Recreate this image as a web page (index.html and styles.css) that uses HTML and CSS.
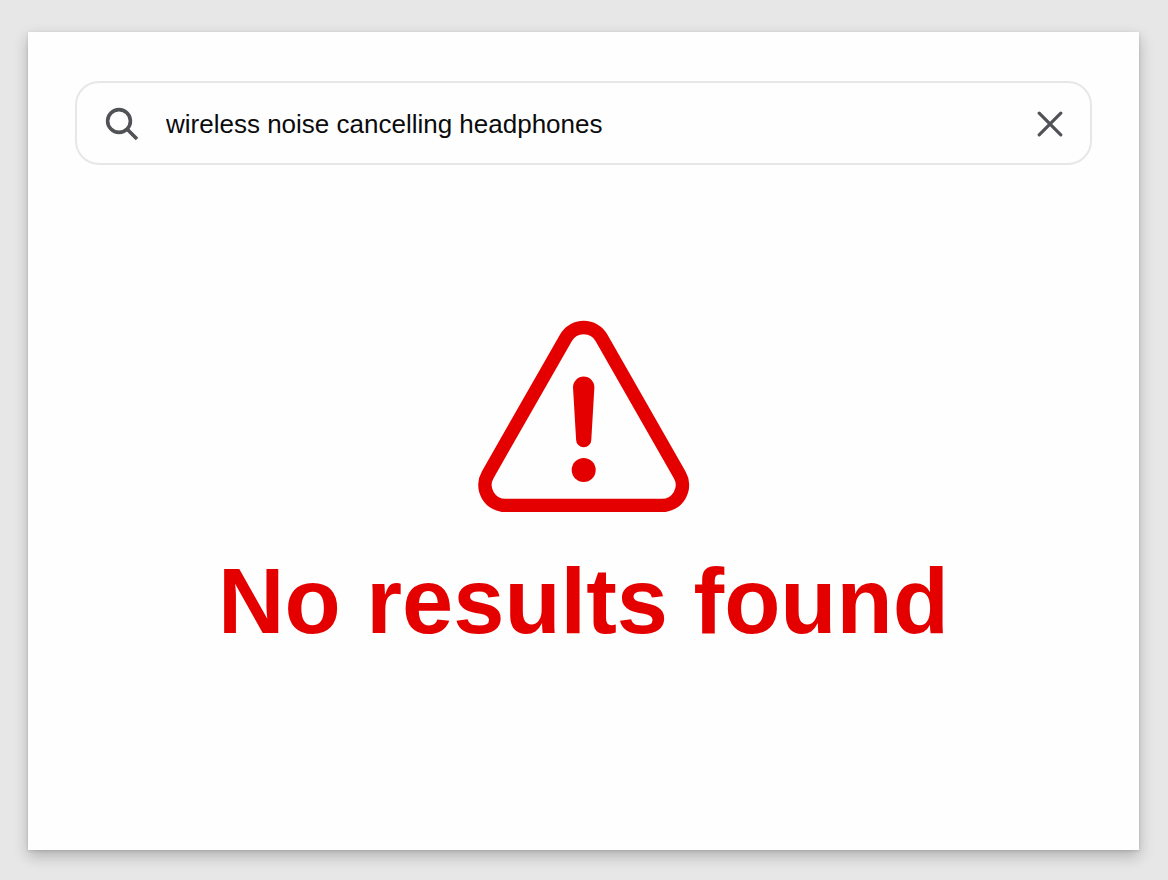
FILE: index.html
```html
<!DOCTYPE html>
<html lang="en">
<head>
	<meta charset="UTF-8">
	<meta name="viewport" content="width=device-width, initial-scale=1">
	<title>Search - No results found</title>
	<link rel="stylesheet" href="styles.css">
</head>
<body>
	<main class="card">
		<form class="search" role="search">
			<label for="query" class="search-label" aria-label="Search">
				<svg class="icon-search" viewBox="0 0 34 34" aria-hidden="true">
					<circle cx="14" cy="14" r="11.4"/>
					<path d="M22.2 22.2L32 32"/>
				</svg>
			</label>
			<input type="text" id="query" class="search-input" value="wireless noise cancelling headphones" autocomplete="off" spellcheck="false">
			<button type="reset" class="search-clear" aria-label="Clear search">
				<svg class="icon-clear" viewBox="0 0 26 26" aria-hidden="true">
					<path d="M2.2 2.2L23.8 23.8M23.8 2.2L2.2 23.8"/>
				</svg>
			</button>
		</form>
		<section class="empty">
			<svg class="icon-warning" viewBox="0 0 212 192" aria-hidden="true">
				<path class="outline" d="M9.7 154.8L87.9 17.8A20.5 20.5 0 0 1 123.5 17.8L201.7 154.8A20.5 20.5 0 0 1 183.9 185.5H27.5A20.5 20.5 0 0 1 9.7 154.8Z"/>
				<path d="M95 67.2A10.7 10.7 0 0 1 116.4 67.2L113.3 119.7A7.6 7.6 0 0 1 98.1 119.7Z"/>
				<circle cx="105.7" cy="150" r="12"/>
			</svg>
			<h1 class="empty-title">No results found</h1>
		</section>
	</main>
</body>
</html>
```
FILE: styles.css
```css
* {
	box-sizing: border-box;
}

body {
	margin: 0;
	min-height: 100vh;
	padding: 32px 29px 30px 28px;
	display: flex;
	background: #e7e7e7;
	font-family: "Liberation Sans", Arial, sans-serif;
}

.card {
	flex: 1;
	display: flex;
	flex-direction: column;
	padding: 49px 47px 48px;
	background: #fefefe;
	box-shadow: 0 6px 14px rgba(0, 0, 0, 0.24), 0 1px 3px rgba(0, 0, 0, 0.12);
}

.search {
	display: flex;
	align-items: center;
	height: 84px;
	padding: 2px 20px 0 28px;
	border: 2px solid #e7e7e8;
	border-radius: 24px;
}

.search-label {
	display: flex;
}

.icon-search {
	width: 34px;
	height: 34px;
	fill: none;
	stroke: #505256;
	stroke-width: 3.6;
}

.search-input {
	flex: 1;
	min-width: 0;
	height: 48px;
	margin: 0 16px 0 27px;
	padding: 0;
	border: none;
	outline: none;
	background: transparent;
	color: #0b0b0c;
	font: 26px "Liberation Sans", Arial, sans-serif;
}

.search-clear {
	display: flex;
	padding: 7px;
	border: none;
	background: transparent;
	cursor: pointer;
}

.icon-clear {
	width: 26px;
	height: 26px;
	fill: none;
	stroke: #505256;
	stroke-width: 3.2;
	stroke-linecap: round;
}

.empty {
	flex: 1;
	display: flex;
	flex-direction: column;
	align-items: center;
	padding-top: 155px;
	color: #e50000;
}

.icon-warning {
	width: 212px;
	height: 192px;
	fill: currentColor;
}

.icon-warning .outline {
	fill: none;
	stroke: currentColor;
	stroke-width: 13.5;
}

.empty-title {
	margin: 37px 0 0;
	font-size: 92px;
	line-height: 104px;
	font-weight: 700;
	text-align: center;
}
```
